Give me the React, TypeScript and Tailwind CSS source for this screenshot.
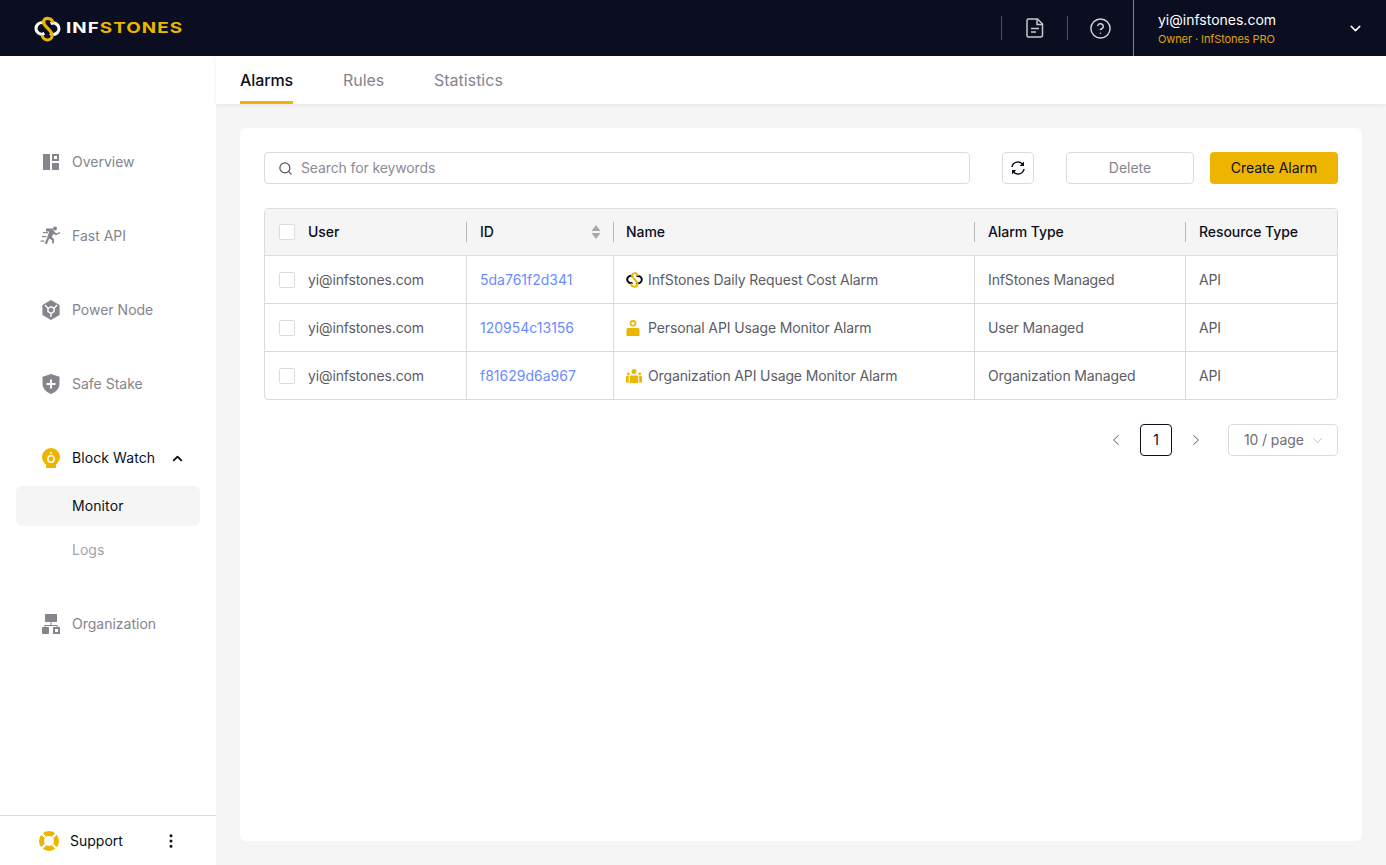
import { ChevronDown, ChevronLeft, ChevronRight, ChevronUp, HelpCircle, MoreVertical, Search } from "lucide-react";
import type { ReactNode } from "react";

function Logo({ size, left, right, stroke = 3 }: { size: number; left: string; right: string; stroke?: number }) {
  return (
    <svg width={size} height={size} viewBox="0 0 26 26" fill="none" strokeWidth={stroke}>
      <path d="M10.500 8.300A5.500 5.500 0 1 0 10 17.800" stroke={left} />
      <path d="M15.500 17.800A5.500 5.500 0 1 0 16 8.300" stroke={left} />
      <path d="M18.200 7.500A4.800 4.800 0 0 0 8.900 6.500C8.900 10.500 17.600 15 17.600 19.500A4.800 4.800 0 0 1 8 19" stroke={right} />
    </svg>
  );
}

function OverviewIcon() {
  return (
    <svg width="16" height="16" viewBox="0 0 16 16" fill="#85858d">
      <rect x="0" y="0" width="7" height="16" />
      <path fillRule="evenodd" d="M9 0h7v7H9zM11 2v3h3V2z" />
      <rect x="9" y="9" width="7" height="7" />
    </svg>
  );
}

function RunnerIcon() {
  return (
    <svg width="22" height="22" viewBox="0 0 22 22" fill="#85858d">
      <circle cx="15" cy="3.500" r="2" />
      <path d="M6 3.600h6.500l1.500 2.600 2.300 2.200 3.400-1.300.5 1.200-4.300 2-2.500-1.600-1.500 3.600 2.300 2-.5 4.200-1.600-.2.100-3.100-3-1.600-2.400 5.600-2-.7 2.600-6.600 1.800-5.400H6z" />
      <rect x="3" y="7" width="5" height="1.200" />
      <rect x="2" y="11" width="4.500" height="1.200" />
      <rect x="0.500" y="15.500" width="4" height="1.200" />
    </svg>
  );
}

function NodeIcon() {
  return (
    <svg width="18" height="20" viewBox="0 0 18 20">
      <path d="M9 0l8.600 5v10L9 20 .4 15V5z" fill="#85858d" />
      <path d="M9 6.700l3 1.700v3.300l-3 1.700-3-1.700V8.400z" fill="none" stroke="#fff" strokeWidth="1.400" />
      <path d="M6 8.400L3 5M12 8.400l3-3.400M9 13.400V17" stroke="#fff" strokeWidth="1.400" />
    </svg>
  );
}

function ShieldIcon() {
  return (
    <svg width="18" height="20" viewBox="0 0 18 20">
      <path d="M9 0l8.500 2.800v6.700c0 5-3.600 8.600-8.500 10.500C4.100 18.100.5 14.500.5 9.500V2.800z" fill="#85858d" />
      <path d="M8 5.500h2V9h3.500v2H10v3.500H8V11H4.500V9H8z" fill="#fff" />
    </svg>
  );
}

function WatchIcon() {
  return (
    <svg width="18" height="20" viewBox="0 0 18 20">
      <circle cx="9" cy="9" r="9" fill="#eeb500" />
      <rect x="4" y="16" width="10" height="4" rx="1" fill="#eeb500" />
      <circle cx="9" cy="11" r="3.200" fill="none" stroke="#fff" strokeWidth="1.500" />
      <circle cx="9" cy="5" r="1.100" fill="#fff" />
    </svg>
  );
}

function OrgIcon() {
  return (
    <svg width="18" height="20" viewBox="0 0 18 20" fill="#85858d">
      <rect x="3" y="0" width="12" height="8" />
      <path d="M8.500 8h1v3H15.500v2h-1v-1h-11v1h-1v-2h6z" />
      <rect x="0" y="13" width="7" height="7" rx="1" />
      <path fillRule="evenodd" d="M11 13h7v7h-7zM13 15v3h3v-3z" />
    </svg>
  );
}

function SupportIcon() {
  return (
    <svg width="20" height="20" viewBox="0 0 20 20" fill="#eeb500">
      <path fillRule="evenodd" d="M10 0a10 10 0 1 0 0 20a10 10 0 0 0 0-20zM10 5a5 5 0 1 1 0 10a5 5 0 0 1 0-10z" />
      <path d="M1 1L6.500 6.500M19 1L13.500 6.500M1 19L6.500 13.500M19 19L13.500 13.500" stroke="#fff" strokeWidth="2.400" />
    </svg>
  );
}

function DocIcon() {
  return (
    <svg width="18" height="20" viewBox="0 0 18 20" fill="none" stroke="#c9c9cd" strokeWidth="1.500">
      <path d="M2.500 1h9l5 5v11a2 2 0 0 1-2 2h-12a1.500 1.500 0 0 1-1.500-1.500V2.500A1.500 1.500 0 0 1 2.500 1z" />
      <path d="M11 1.500V6.500h5" />
      <path d="M5 10.500h8M5 14h5" />
    </svg>
  );
}

function RefreshIcon() {
  return (
    <svg width="16" height="16" viewBox="0 0 16 16" fill="none" stroke="#0b0f20" strokeWidth="1.500">
      <path d="M2 7A6 6 0 0 1 12.800 4.500" />
      <path d="M14 9A6 6 0 0 1 3.200 11.500" />
      <path d="M14 1.500V6H9.700z" fill="#0b0f20" stroke="none" />
      <path d="M2 14.500V10h4.300z" fill="#0b0f20" stroke="none" />
    </svg>
  );
}

function PersonIcon() {
  return (
    <svg width="14" height="16" viewBox="0 0 14 16" fill="#eeb500">
      <path fillRule="evenodd" d="M7 0a3.300 3.300 0 1 0 0 6.600A3.300 3.300 0 0 0 7 0zM7 1.700a1.600 1.600 0 1 1 0 3.200a1.600 1.600 0 0 1 0-3.200z" />
      <path d="M2 8h10a1.500 1.500 0 0 1 1.500 1.500V16H.5V9.500A1.500 1.500 0 0 1 2 8z" />
    </svg>
  );
}

function GroupIcon() {
  return (
    <svg width="16" height="14" viewBox="0 0 16 14" fill="#eeb500">
      <circle cx="8" cy="2.500" r="2.500" />
      <circle cx="2.300" cy="5" r="1.400" />
      <circle cx="13.700" cy="5" r="1.400" />
      <path d="M4.800 6.500h6.400a1 1 0 0 1 1 1v6.500H3.800V7.500a1 1 0 0 1 1-1z" />
      <path d="M0 8a1 1 0 0 1 1-1h1.800v6.500H0zM13.200 7H15a1 1 0 0 1 1 1v5.500h-2.800z" />
    </svg>
  );
}

function SortIcon() {
  return (
    <svg width="10" height="14" viewBox="0 0 10 14" fill="#a8a8a8">
      <path d="M5 0l4.500 6H.5zM5 14L.5 8h9z" />
    </svg>
  );
}

function NavItem({ icon, label }: { icon: ReactNode; label: string }) {
  return (
    <div className="flex h-10 items-center">
      <div className="flex w-[72px] shrink-0 items-center justify-center pl-[30px]">{icon}</div>
      <span className="text-[#85858d]">{label}</span>
    </div>
  );
}

function Checkbox() {
  return <div className="h-4 w-4 rounded-[2px] border border-[#dcdcdc] bg-white" />;
}

const columns = "grid grid-cols-[201px_147px_361px_211px_1fr]";

const rows = [
  { id: "5da761f2d341", icon: <Logo size={17} left="#0b0f20" right="#eeb500" />, name: "InfStones Daily Request Cost Alarm", type: "InfStones Managed" },
  { id: "120954c13156", icon: <PersonIcon />, name: "Personal API Usage Monitor Alarm", type: "User Managed" },
  { id: "f81629d6a967", icon: <GroupIcon />, name: "Organization API Usage Monitor Alarm", type: "Organization Managed" },
];

export default function App() {
  return (
    <div className="flex h-[865px] flex-col overflow-hidden bg-white text-sm font-['Inter',sans-serif]">
      <header className="flex h-14 shrink-0 items-center justify-between bg-[#0a0e20]">
        <div className="flex items-center gap-[5px] pl-[34px]">
          <Logo size={27} left="#ffffff" right="#eeb500" />
          <span className="origin-left scale-x-[1.3] text-[14.5px] font-bold leading-none tracking-[0.8px]">
            <span className="text-white">INF</span>
            <span className="text-[#eeb500]">STONES</span>
          </span>
        </div>
        <div className="flex h-full items-center">
          <div className="h-6 w-px bg-[#4b4e5b]" />
          <div className="flex w-[65px] justify-center">
            <DocIcon />
          </div>
          <div className="h-6 w-px bg-[#4b4e5b]" />
          <div className="flex w-[65px] justify-center">
            <HelpCircle size={23} strokeWidth={1.5} color="#d4d4d8" />
          </div>
          <div className="flex h-full w-[253px] items-center justify-between border-l border-[#83858e] pl-6 pr-[22px]">
            <div className="flex flex-col pt-px">
              <span className="leading-[18px] text-white">yi@infstones.com</span>
              <span className="mt-[2px] text-[11px] leading-[16px] tracking-[-0.1px] text-[#e0a30c]">Owner · InfStones PRO</span>
            </div>
            <ChevronDown size={17} color="#ffffff" />
          </div>
        </div>
      </header>

      <div className="flex min-h-0 flex-1">
        <aside className="flex w-[216px] shrink-0 flex-col justify-between bg-white">
          <nav className="flex flex-col pt-[86px]">
            <div className="flex flex-col gap-[34px]">
              <NavItem icon={<OverviewIcon />} label="Overview" />
              <NavItem icon={<RunnerIcon />} label="Fast API" />
              <NavItem icon={<NodeIcon />} label="Power Node" />
              <NavItem icon={<ShieldIcon />} label="Safe Stake" />
              <div className="flex flex-col">
                <div className="flex h-10 items-center">
                  <div className="flex w-[72px] shrink-0 items-center justify-center pl-[30px]">
                    <WatchIcon />
                  </div>
                  <span className="tracking-[0.08px] text-[#0b0f20]">Block Watch</span>
                  <ChevronUp size={15} strokeWidth={3} color="#0b0f20" className="ml-[15px]" />
                </div>
                <div className="mx-4 mt-2 flex h-10 items-center rounded-md bg-[#f5f5f5] pl-14 tracking-[0.1px] text-[#0b0f20]">Monitor</div>
                <div className="mt-1 flex h-10 items-center pl-[72px] text-[#a3a3a8]">Logs</div>
              </div>
              <NavItem icon={<OrgIcon />} label="Organization" />
            </div>
          </nav>
          <div className="flex h-[50px] items-center border-t border-[#dcdcdc] pl-[39px]">
            <SupportIcon />
            <span className="ml-[11px] text-[#0b0f20]">Support</span>
            <MoreVertical size={18} color="#0b0f20" className="ml-[39px]" />
          </div>
        </aside>

        <main className="flex min-w-0 flex-1 flex-col bg-[#f5f5f5]">
          <div className="flex h-12 shrink-0 items-end gap-[50px] bg-white pl-6 text-base shadow-[0_1px_4px_rgba(0,0,0,0.08)]">
            <div className="flex h-full items-center border-b-[3px] border-[#eeb500] pt-[3px] font-medium tracking-[-0.1px] text-[#0b0f20]">Alarms</div>
            <div className="flex h-full items-center tracking-[-0.1px] text-[#85858d]">Rules</div>
            <div className="flex h-full items-center text-[#85858d]">Statistics</div>
          </div>

          <div className="mx-6 mt-6 h-[713px] rounded-md bg-white p-6">
            <div className="flex h-8 items-center">
              <div className="flex h-8 w-[706px] items-center gap-2 rounded border border-[#dcdcdc] pl-[13px]">
                <Search size={15} color="#55555c" />
                <span className="tracking-[-0.12px] text-[#8c8c94]">Search for keywords</span>
              </div>
              <button className="ml-8 flex h-8 w-8 items-center justify-center rounded border border-[#dcdcdc]">
                <RefreshIcon />
              </button>
              <button className="ml-8 h-8 w-32 rounded border border-[#dcdcdc] text-[#85858d]">Delete</button>
              <button className="ml-4 h-8 w-32 rounded bg-[#eeb500] text-[#0b0f20]">Create Alarm</button>
            </div>

            <div className="mt-6 overflow-hidden rounded border border-[#dcdcdc]">
              <div className={`${columns} h-[47px] items-center border-b border-[#dcdcdc] bg-[#f5f5f5] tracking-[-0.07px] text-[#0b0f20]`}>
                <div className="flex items-center gap-[13px] pl-[14px]">
                  <Checkbox />
                  <span className="font-medium">User</span>
                </div>
                <div className="flex h-5 items-center justify-between border-l border-[#b9b9bd] pl-[13px] pr-3">
                  <span className="font-medium">ID</span>
                  <SortIcon />
                </div>
                <div className="flex h-5 items-center border-l border-[#b9b9bd] pl-3 font-medium">Name</div>
                <div className="flex h-5 items-center border-l border-[#b9b9bd] pl-[13px] font-medium">Alarm Type</div>
                <div className="flex h-5 items-center border-l border-[#b9b9bd] pl-[13px] font-medium">Resource Type</div>
              </div>
              {rows.map((row, i) => (
                <div
                  key={row.id}
                  className={`${columns} ${i < 2 ? "h-12 border-b border-[#dcdcdc]" : "h-[47px]"} tracking-[-0.13px] text-[#5c5c64]`}
                >
                  <div className="flex items-center gap-[13px] pl-[14px]">
                    <Checkbox />
                    <span>yi@infstones.com</span>
                  </div>
                  <div className="flex items-center border-l border-[#dcdcdc] pl-[13px] tracking-normal text-[#6b8cff]">{row.id}</div>
                  <div className="flex items-center border-l border-[#dcdcdc] pl-3">
                    <div className="flex w-[22px] shrink-0 justify-start">{row.icon}</div>
                    <span>{row.name}</span>
                  </div>
                  <div className="flex items-center border-l border-[#dcdcdc] pl-[13px]">{row.type}</div>
                  <div className="flex items-center border-l border-[#dcdcdc] pl-[13px]">API</div>
                </div>
              ))}
            </div>

            <div className="mt-6 flex h-8 items-center justify-end">
              <ChevronLeft size={18} strokeWidth={1.4} color="#6e6e76" className="mr-[1px]" />
              <div className="ml-[14px] flex h-8 w-8 items-center justify-center rounded border border-[#0b0f20] text-[#0b0f20]">1</div>
              <ChevronRight size={18} strokeWidth={1.4} color="#6e6e76" className="ml-[15px]" />
              <div className="ml-[23px] flex h-8 w-[110px] items-center gap-[5px] rounded border border-[#dcdcdc] pl-[15px] tracking-[-0.12px] text-[#6e6e76]">
                <span>10 / page</span>
                <ChevronDown size={17} strokeWidth={1} color="#a8a8ac" />
              </div>
            </div>
          </div>
        </main>
      </div>
    </div>
  );
}
